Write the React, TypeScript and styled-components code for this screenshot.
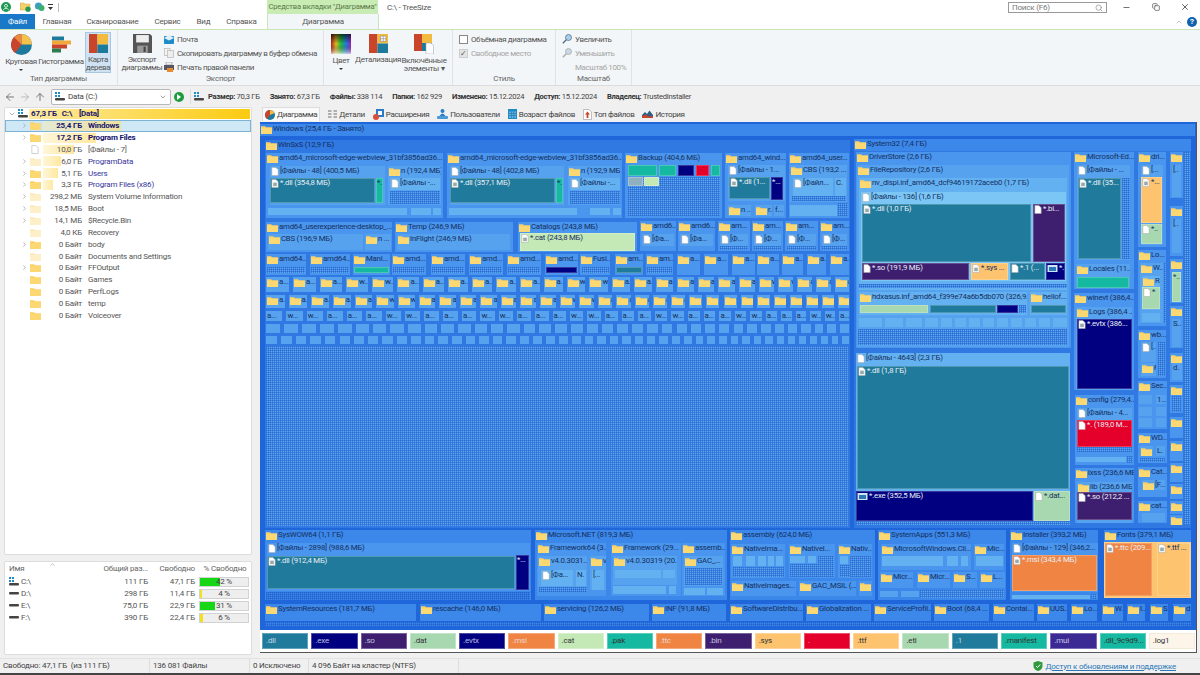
import React from "react";
import styled, { createGlobalStyle } from "styled-components";
import { ArrowLeft, ArrowRight, ArrowUp, ChevronDown, ChevronRight, ChevronUp, Minus, Copy, X, Search } from "lucide-react";

const UI_FONT = `Roboto, "Noto Sans", "Liberation Sans", sans-serif`;

const GlobalStyle = createGlobalStyle`
    html, body { margin: 0; padding: 0; background: #f0f0f0; }
    body { font-family: ${UI_FONT}; font-size: 8px; letter-spacing: -.2px; color: #444; }
    * { box-sizing: border-box; }
`;

const Shell = styled.div`
    width: 1200px;
    height: 675px;
    display: flex;
    flex-direction: column;
    overflow: hidden;
    background: #f0f0f0;
    border-bottom: 2px solid #444;
`;

/* ---------- title + tabs ---------- */

const TitleRow = styled.div`
    height: 14px;
    display: flex;
    align-items: center;
    background: #fff;
`;

const QuickAccess = styled.div`
    width: 267px;
    display: flex;
    align-items: center;
    gap: 3px;
    padding-left: 1px;
`;

const QuickSpacer = styled.div`
    width: 3px;
`;

const QuickSep = styled.div`
    width: 1px;
    height: 9px;
    margin-left: 2px;
    background: #bbb;
`;

const ContextTitle = styled.div`
    width: 111px;
    height: 14px;
    background: #c9ebb4;
    color: #5a7a4a;
    font-size: 7.6px;
    line-height: 14px;
    text-align: center;
    white-space: nowrap;
`;

const WindowTitle = styled.div`
    margin-left: 9px;
    font-size: 8px;
    color: #555;
    flex: 1;
`;

const SearchBox = styled.div`
    width: 99px;
    height: 11px;
    margin-top: 1px;
    border: 1px solid #999;
    display: flex;
    align-items: center;
    justify-content: space-between;
    padding: 0 3px;
    color: #777;
    font-size: 8px;
`;

const WindowButtons = styled.div`
    width: 93px;
    display: flex;
    justify-content: space-between;
    align-items: center;
    padding: 0 10px 0 15px;
    color: #444;
`;

const TabRow = styled.div`
    height: 15px;
    display: flex;
    align-items: stretch;
    background: #fff;
`;

const FileTab = styled.div`
    width: 35px;
    background: #1a78c8;
    color: #fff;
    font-size: 8px;
    line-height: 15px;
    text-align: center;
`;

const Tab = styled.div<{ $w: number }>`
    width: ${p => p.$w}px;
    color: #555;
    font-size: 8px;
    line-height: 15px;
    text-align: center;
    white-space: nowrap;
`;

const ActiveTab = styled.div`
    width: 112px;
    margin-left: 2px;
    color: #555;
    font-size: 8px;
    line-height: 15px;
    text-align: center;
    background: #f3f6f8;
    border: 1px solid #c9e4b6;
    border-width: 0 1px;
`;

const HelpCorner = styled.div`
    margin-left: auto;
    display: flex;
    align-items: center;
    gap: 4px;
    padding-right: 3px;
    color: #aaa;
`;

const HelpDot = styled.div`
    width: 10px;
    height: 10px;
    border-radius: 50%;
    background: #0f62ae;
    color: #fff;
    font-size: 8px;
    font-weight: 700;
    line-height: 10px;
    text-align: center;
`;

/* ---------- ribbon ---------- */

const Ribbon = styled.div`
    height: 57px;
    display: flex;
    background: #f3f6f8;
    border-top: 1px solid #c9e4b6;
    border-bottom: 1px solid #dcdcdc;
`;

const Group = styled.div<{ $w: number }>`
    width: ${p => p.$w}px;
    display: flex;
    flex-direction: column;
    border-right: 1px solid #e0e3e5;
`;

const GroupBody = styled.div<{ $pad?: number }>`
    flex: 1;
    display: flex;
    padding: 2px 0 0 ${p => p.$pad ?? 0}px;
`;

const GroupLabel = styled.div`
    height: 12px;
    line-height: 11px;
    text-align: center;
    color: #666;
    font-size: 8px;
`;

const BigButton = styled.div<{ $w: number; $on?: boolean; $ml?: number }>`
    width: ${p => p.$w}px;
    height: 41px;
    margin-left: ${p => p.$ml ?? 0}px;
    flex: none;
    display: flex;
    flex-direction: column;
    align-items: center;
    color: #555;
    font-size: 8px;
    letter-spacing: -.35px;
    line-height: 8px;
    text-align: center;
    padding-top: 1px;
    background: ${p => (p.$on ? "#cfe2f3" : "transparent")};
    border: 1px solid ${p => (p.$on ? "#a8c8e2" : "transparent")};
    svg { flex: none; margin-bottom: 3px; }
`;

const BigWord = styled.span`
    white-space: nowrap;
`;

const Caret = styled.div`
    width: 0;
    height: 0;
    margin: 3px auto 0;
    border: 2px solid transparent;
    border-top: 2px solid #333;
    border-bottom: 0;
`;

const SmallStack = styled.div<{ $ml?: number }>`
    margin-left: ${p => p.$ml ?? 0}px;
    padding-top: 1px;
    display: flex;
    flex-direction: column;
    gap: 2px;
`;

const SmallRow = styled.div<{ $muted?: boolean }>`
    height: 12px;
    display: flex;
    align-items: center;
    gap: 3px;
    white-space: nowrap;
    font-size: 8px;
    letter-spacing: -.4px;
    color: ${p => (p.$muted ? "#a5a5a5" : "#555")};
`;

const Check = styled.div<{ $on?: boolean }>`
    width: 9px;
    height: 9px;
    border: 1px solid ${p => (p.$on ? "#ccc" : "#888")};
    background: ${p => (p.$on ? "#e4e4e4" : "#fff")};
    color: #555;
    font-size: 8px;
    line-height: 7px;
    text-align: center;
`;

const IconSlot = styled.div`
    width: 10px;
    height: 9px;
`;

/* ---------- address bar ---------- */

const AddressBar = styled.div`
    height: 21px;
    display: flex;
    align-items: center;
    background: #f0f0f0;
    padding-left: 4px;
    color: #666;
`;

const NavIcons = styled.div`
    width: 47px;
    display: flex;
    gap: 3px;
    color: #777;
`;

const DriveCombo = styled.div`
    width: 120px;
    height: 16px;
    background: #fff;
    border: 1px solid #b8b8b8;
    border-radius: 2px;
    display: flex;
    align-items: center;
    gap: 3px;
    padding: 0 3px;
    font-size: 8px;
    color: #444;
`;

const ComboText = styled.span`
    flex: 1;
`;

const PlayButton = styled.div`
    width: 10px;
    height: 10px;
    margin: 0 6px 0 3px;
    border-radius: 50%;
    background: #1d9a3c;
    display: flex;
    align-items: center;
    justify-content: center;
    &::after {
        content: "";
        border: 3px solid transparent;
        border-left: 4px solid #fff;
        border-right: 0;
    }
`;

const StatsRow = styled.div`
    display: flex;
    align-items: center;
    gap: 10px;
    padding-left: 3px;
    border-left: 1px solid #ddd;
    height: 15px;
`;

const StatLead = styled.div`
    display: flex;
    align-items: center;
    gap: 4px;
`;

const Stat = styled.span`
    font-size: 7.6px;
    letter-spacing: -.3px;
    color: #444;
    white-space: nowrap;
    b { color: #333; font-weight: 700; }
`;

/* ---------- body ---------- */

const Main = styled.div`
    flex: 1;
    min-height: 0;
    display: flex;
`;

const Sidebar = styled.div`
    width: 260px;
    padding: 0 8px 0 4px;
    display: flex;
    flex-direction: column;
`;

const TreePanel = styled.div`
    height: 448px;
    background: #fff;
    border: 1px solid #ddd;
    border-radius: 2px;
`;

const TreeRow = styled.div<{ $selected?: boolean }>`
    position: relative;
    height: 11.85px;
    display: flex;
    align-items: center;
    white-space: nowrap;
    font-size: 8px;
    line-height: 11px;
    background: ${p => (p.$selected ? "#cfe8f6" : "transparent")};
    box-shadow: ${p => (p.$selected ? "inset 0 0 0 1px #7cb2d4" : "none")};
`;

const SizeBar = styled.div`
    position: absolute;
    top: 1px;
    bottom: 1px;
    left: 38px;
    background: linear-gradient(90deg, rgba(255, 236, 170, .45), rgba(255, 222, 120, .7));
`;

const RootBar = styled(SizeBar)`
    left: 24px;
    right: 1px;
    background: linear-gradient(90deg, #ffeaa0, #fbcb10);
`;

const Chevron = styled.div`
    position: relative;
    width: 24px;
    flex: none;
    display: flex;
    justify-content: flex-end;
    padding-right: 1px;
    color: #888;
`;

const RootChevron = styled(Chevron)`
    width: 12px;
`;

const RowIcon = styled.div`
    position: relative;
    width: 12px;
    flex: none;
    display: flex;
    justify-content: center;
`;

const RowSize = styled.span<{ $bold?: boolean }>`
    position: relative;
    width: 41px;
    flex: none;
    text-align: right;
    font-weight: ${p => (p.$bold ? 700 : 400)};
    color: ${p => (p.$bold ? "#1a1a70" : "#555")};
`;

const RowName = styled.span<{ $kind: string }>`
    position: relative;
    margin-left: 6px;
    font-weight: ${p => (p.$kind === "bold" ? 700 : 400)};
    color: ${p => (p.$kind === "bold" ? "#14146e" : p.$kind === "blue" ? "#35359a" : "#555")};
`;

const RootText = styled.span<{ $ml: number }>`
    position: relative;
    margin-left: ${p => p.$ml}px;
    font-weight: 700;
    font-size: 8px;
    color: #1a1a70;
`;

const DrivesPanel = styled.div`
    height: 94px;
    margin-top: 6px;
    background: #fff;
    border: 1px solid #ddd;
    border-radius: 2px;
    position: relative;
`;

const SortMark = styled.div`
    position: absolute;
    top: -1px;
    left: 44px;
    color: #999;
`;

const DriveGrid = styled.div`
    display: grid;
    grid-template-columns: 90px 56px 47px 1fr;
    grid-auto-rows: 11.9px;
    align-items: center;
    height: 100%;
    padding-top: 2px;
`;

const HeadCell = styled.div<{ $align?: string }>`
    height: 15px;
    line-height: 15px;
    padding: 0 3px 0 4px;
    text-align: ${p => p.$align ?? "right"};
    white-space: nowrap;
    font-size: 8px;
    color: #666;
    margin-bottom: 3px;
`;

const DriveCell = styled.div<{ $align?: string }>`
    display: flex;
    align-items: center;
    justify-content: ${p => p.$align ?? "flex-end"};
    gap: 2px;
    padding: 0 3px 0 4px;
    font-size: 8px;
    color: #555;
    white-space: nowrap;
`;

const FreeBar = styled.div`
    position: relative;
    width: 50px;
    height: 10px;
    margin-left: 1px;
    background: #eee;
    border: 1px solid #d2d2d2;
    text-align: center;
    line-height: 8px;
    font-size: 8px;
    color: #444;
`;

const FreeFill = styled.div<{ $low?: boolean }>`
    position: absolute;
    top: 0;
    bottom: 0;
    left: 0;
    background: ${p => (p.$low ? "#f2e21e" : "#16d616")};
`;

const FreeText = styled.span`
    position: relative;
`;

const Content = styled.div`
    flex: 1;
    min-width: 0;
    display: flex;
    flex-direction: column;
    padding-right: 3px;
`;

const ViewTabs = styled.div`
    height: 15px;
    display: flex;
    align-items: flex-start;
    gap: 8px;
    padding-left: 2px;
`;

const ViewTab = styled.div<{ $on?: boolean }>`
    height: 14px;
    display: flex;
    align-items: center;
    gap: 2px;
    padding: 0 ${p => (p.$on ? 2 : 0)}px;
    font-size: 8px;
    letter-spacing: -.35px;
    color: #444;
    white-space: nowrap;
    background: ${p => (p.$on ? "#fafafa" : "transparent")};
    border: ${p => (p.$on ? "1px solid #ddd" : "0")};
    border-bottom: 0;
`;

const Frame = styled.div`
    width: 937px;
    height: 531px;
    display: flex;
    flex-direction: column;
    background: #fff;
    border-right: 1px solid #555;
    border-bottom: 1px solid #555;
`;

const Canvas = styled.div`
    position: relative;
    height: 508px;
    overflow: hidden;
    background: #1f66da;
`;

const fills: Record<string, string> = {
    b0: "#3078e2",
    b1: "#3c87ea",
    b2: "#4a95ee",
    b3: "#56a2ef",
    b4: "#64b1f2",
    b5: "#7cc6f5",
    dll: "#1f7a9c",
    exe: "#000080",
    so: "#3e1f6f",
    dat: "#a8d8b0",
    cat: "#c5e8b7",
    pak: "#15b8a0",
    red: "#e4002b",
    msi: "#f08442",
    sys: "#fdc36f",
    mui: "#3c2a94",
    grey: "#8fb0c0",
    log: "#fdf5ea",
    dots: "#5aa6f0",
    dotsb: "#3c87ea",
};

const darkFills = ["dll", "exe", "so", "red", "msi", "mui"];

const lighter = (tone: string) => (tone.startsWith("b") || tone.startsWith("dots") ? "transparent" : "rgba(255,255,255,.22)");

const Cell = styled.div.attrs<{ $x: number; $y: number; $w: number; $h: number }>(p => ({
    style: { left: p.$x - 260, top: p.$y - 122, width: p.$w, height: p.$h },
}))<{ $x: number; $y: number; $w: number; $h: number; $tone: string }>`
    position: absolute;
    overflow: hidden;
    white-space: nowrap;
    display: flex;
    align-items: flex-start;
    padding: 0 0 0 1px;
    font-size: 7.8px;
    letter-spacing: -.22px;
    line-height: 10px;
    background-color: ${p => fills[p.$tone]};
    color: ${p => (darkFills.includes(p.$tone) ? "#e8eef5" : "#15305f")};
    box-shadow: inset 0 0 0 1px ${p => lighter(p.$tone)};
    ${p =>
        p.$tone.startsWith("dots")
            ? `background-image: linear-gradient(90deg, rgba(25,85,200,.45) 1px, transparent 1px), linear-gradient(rgba(25,85,200,.45) 1px, transparent 1px);
               background-size: 2px 2px;`
            : ""}
    svg { flex: none; margin: 1px 1px 0 0; }
`;

const Legend = styled.div`
    flex: 1;
    display: flex;
    align-items: center;
    gap: 3px;
    padding: 0 1px 1px 2px;
`;

const Chip = styled.div<{ $tone: string }>`
    flex: 1;
    min-width: 0;
    height: 16px;
    padding-left: 3px;
    overflow: hidden;
    white-space: nowrap;
    font-size: 8px;
    line-height: 14px;
    background: ${p => fills[p.$tone]};
    color: ${p => (darkFills.includes(p.$tone) ? "rgba(235,240,255,.78)" : "#333")};
    border: 1px solid ${p => (p.$tone === "log" ? "#f4ead8" : "rgba(255,255,255,.3)")};
`;

const StatusBar = styled.div`
    height: 15px;
    display: flex;
    align-items: center;
    font-size: 8px;
    color: #444;
    white-space: nowrap;
    border-top: 1px solid #e2e2e2;
`;

const StatusCell = styled.div<{ $w: number }>`
    width: ${p => p.$w}px;
    padding-left: 3px;
    height: 100%;
    line-height: 14px;
    border-right: 1px solid #ddd;
`;

const StatusLink = styled.a`
    margin-left: auto;
    padding-right: 24px;
    display: flex;
    align-items: center;
    gap: 2px;
    color: #2a78b8;
    text-decoration: underline;
`;

/* ---------- drawings ---------- */

const Folder = ({ pale }: { pale?: boolean }) => (
    <svg width="11" height="9" viewBox="0 0 11 9">
        <path d="M0 1.2 L4 1.2 L5 2.2 L11 2.2 L11 9 L0 9 Z" fill={pale ? "#fbe9b8" : "#fbd066"} />
        <rect x="0" y="3" width="11" height="6" fill={pale ? "#fdf0c8" : "#fcd873"} />
    </svg>
);

const Doc = ({ inner }: { inner?: string }) => (
    <svg width="8" height="9" viewBox="0 0 8 10">
        <path d="M.5 .5 H5 L7.5 3 V9.5 H.5 Z" fill="#fff" stroke="#aaa" strokeWidth=".6" />
        {inner && <rect x="2" y="4" width="4" height="4" fill={inner} />}
    </svg>
);

const ExeIcon = () => (
    <svg width="11" height="9" viewBox="0 0 11 9">
        <rect x=".5" y="1" width="10" height="7" fill="#cfe4f5" />
        <rect x="2" y="3" width="7" height="4" fill="#2a78b8" />
    </svg>
);

const DriveIcon = () => (
    <svg width="10" height="9" viewBox="0 0 10 9">
        <rect x="0" y="0" width="2" height="2" fill="#1f8ac8" />
        <rect x="3" y="0" width="2" height="2" fill="#1f8ac8" />
        <rect x="0" y="3" width="2" height="2" fill="#1f8ac8" />
        <rect x="3" y="3" width="2" height="2" fill="#1f8ac8" />
        <rect x="0" y="6" width="10" height="2.5" rx="1" fill="#444" />
    </svg>
);

const DiskIcon = () => (
    <svg width="10" height="5" viewBox="0 0 10 5">
        <rect x="0" y="1" width="10" height="2.5" rx="1" fill="#444" />
    </svg>
);

const cellIcon = (kind?: string) => {
    if (kind === "f") return <Folder />;
    if (kind === "d") return <Doc />;
    if (kind === "s") return <Doc inner="#9aa" />;
    if (kind === "x") return <ExeIcon />;
    return null;
};

const PieIcon = () => (
    <svg width="21" height="21" viewBox="0 0 20 20">
        <circle cx="10" cy="10" r="10" fill="#1d7a9c" />
        <path d="M10 10 L10 0 A10 10 0 0 0 0 10 A10 10 0 0 0 4 18 Z" fill="#c8452c" />
        <path d="M10 10 L10 0 A10 10 0 0 1 20 10 Z" fill="#f6c04c" />
        <path d="M10 10 L3 3 A10 10 0 0 1 10 0 Z" fill="#ef8a3c" />
    </svg>
);

const HistogramIcon = () => (
    <svg width="20" height="21" viewBox="0 0 20 20">
        <rect x="1" y="2" width="12" height="4" fill="#1d7a9c" />
        <rect x="1" y="6" width="19" height="4" fill="#f2a93a" />
        <rect x="1" y="10" width="15" height="4" fill="#c8452c" />
        <rect x="1" y="14" width="9" height="4" fill="#2e7d4f" />
    </svg>
);

const TreemapIcon = () => (
    <svg width="19" height="19" viewBox="0 0 18 18">
        <rect width="8" height="18" fill="#c8452c" />
        <rect x="8" width="10" height="10" fill="#f2bb40" />
        <rect x="8" y="10" width="10" height="8" fill="#1d7a9c" />
    </svg>
);

const FloppyIcon = () => (
    <svg width="19" height="19" viewBox="0 0 18 18">
        <path d="M0 0 H16 L18 2 V18 H0 Z" fill="#555" />
        <rect x="3" y="1" width="12" height="7" fill="#eee" />
        <rect x="4" y="11" width="10" height="7" fill="#999" />
        <rect x="10" y="12" width="2" height="5" fill="#444" />
    </svg>
);

const RainbowIcon = () => (
    <svg width="20" height="20" viewBox="0 0 20 20">
        <defs>
            <linearGradient id="rainbowH" x1="0" x2="1" y1="0" y2="0">
                <stop offset="0" stopColor="#c02020" />
                <stop offset=".25" stopColor="#e0c020" />
                <stop offset=".5" stopColor="#20c040" />
                <stop offset=".75" stopColor="#2080e0" />
                <stop offset="1" stopColor="#a020c0" />
            </linearGradient>
            <linearGradient id="rainbowV" x1="0" x2="0" y1="0" y2="1">
                <stop offset="0" stopColor="#000" stopOpacity=".7" />
                <stop offset=".5" stopColor="#000" stopOpacity="0" />
                <stop offset="1" stopColor="#fff" stopOpacity=".7" />
            </linearGradient>
        </defs>
        <rect width="20" height="20" fill="url(#rainbowH)" />
        <rect width="20" height="20" fill="url(#rainbowV)" />
    </svg>
);

const DetailIcon = () => (
    <svg width="19" height="19" viewBox="0 0 18 18">
        <rect width="8" height="18" fill="#c8452c" />
        <rect x="8" width="10" height="9" fill="#f2bb40" />
        <rect x="8" y="9" width="10" height="9" fill="#1d7a9c" />
        <path d="M11 2 H16 V7 H11 Z M13.5 2 V7 M11 4.5 H16" fill="#fff" stroke="#777" strokeWidth=".5" />
    </svg>
);

const IncludedIcon = () => (
    <svg width="20" height="20" viewBox="0 0 20 20">
        <rect width="8" height="17" fill="#c8452c" />
        <rect x="8" width="10" height="9" fill="#f2bb40" />
        <rect x="8" y="9" width="10" height="8" fill="#1d7a9c" />
        <path d="M12 9 H17 L19.5 11.5 V20 H12 Z" fill="#fff" stroke="#999" strokeWidth=".5" />
    </svg>
);

const MailIcon = () => (
    <svg width="10" height="9" viewBox="0 0 10 9">
        <rect y="1" width="10" height="8" rx="1" fill="#1f8ac8" />
        <path d="M0 3 L5 0 L10 3 L5 5.5 Z" fill="#dff0fa" />
    </svg>
);

const CopyIcon = () => (
    <svg width="10" height="10" viewBox="0 0 10 10">
        <rect x=".5" y=".5" width="5.5" height="7" fill="#f4f4f4" stroke="#b5b5b5" strokeWidth=".7" />
        <rect x="3.5" y="2.5" width="6" height="7" fill="#eee" stroke="#b5b5b5" strokeWidth=".7" />
    </svg>
);

const PrintIcon = () => (
    <svg width="10" height="10" viewBox="0 0 10 10">
        <rect x="2" y="0" width="6" height="3" fill="#eee" stroke="#777" strokeWidth=".5" />
        <rect x="0" y="3" width="10" height="5" fill="#556" />
        <rect x="3" y="6" width="6" height="4" fill="#e98a2c" />
    </svg>
);

const ZoomIcon = ({ muted }: { muted?: boolean }) => (
    <svg width="10" height="10" viewBox="0 0 10 10">
        <circle cx="6.5" cy="3.5" r="3" fill={muted ? "#c8d8e4" : "#a8d0ec"} stroke={muted ? "#aaa" : "#56708a"} strokeWidth=".8" />
        <path d="M4.3 5.7 L.8 9.2" stroke={muted ? "#aaa" : "#56708a"} strokeWidth="1.4" />
    </svg>
);

const PersonBadge = () => (
    <svg width="10" height="10" viewBox="0 0 10 10">
        <circle cx="5" cy="5" r="5" fill="#1e9a50" />
        <circle cx="5" cy="3.8" r="1.5" fill="none" stroke="#fff" strokeWidth=".8" />
        <path d="M2.2 8 Q5 4.5 7.8 8" fill="none" stroke="#fff" strokeWidth=".8" />
    </svg>
);

const FolderPlay = () => (
    <svg width="11" height="10" viewBox="0 0 11 10">
        <path d="M0 1 H4 L5 2 H10 V8 H0 Z" fill="#f5cf6c" stroke="#b89a40" strokeWidth=".4" />
        <circle cx="8" cy="7.2" r="2.6" fill="#1e9a50" />
    </svg>
);

const CloudBadge = () => (
    <svg width="11" height="10" viewBox="0 0 11 10">
        <circle cx="4.5" cy="4" r="3.6" fill="#3aa0c0" />
        <circle cx="7.5" cy="6" r="3" fill="#3bb070" />
    </svg>
);

const DropMark = () => (
    <svg width="5" height="7" viewBox="0 0 5 7">
        <rect y="0" width="5" height="1" fill="#333" />
        <path d="M0 3 H5 L2.5 6 Z" fill="#333" />
    </svg>
);

const TabPie = () => (
    <svg width="10" height="10" viewBox="0 0 10 10">
        <circle cx="5" cy="5" r="5" fill="#1d7a9c" />
        <path d="M5 5 L5 0 A5 5 0 0 0 0 5 A5 5 0 0 0 2 9 Z" fill="#c8452c" />
        <path d="M5 5 L5 0 A5 5 0 0 1 9.5 3 Z" fill="#f2bb40" />
    </svg>
);

const TabGrid = () => (
    <svg width="9" height="9" viewBox="0 0 9 9">
        <path d="M0 1 H3.5 M0 4 H3.5 M0 7 H3.5 M5.5 1 H9 M5.5 4 H9 M5.5 7 H9" stroke="#999" strokeWidth="1.6" />
    </svg>
);

const TabExt = () => (
    <svg width="11" height="11" viewBox="0 0 11 11">
        <rect x="3" y="0" width="8" height="8" fill="#2a7cc8" />
        <rect x="5" y="2" width="4" height="4" fill="#fff" />
        <circle cx="3" cy="8" r="3" fill="#d8503a" />
    </svg>
);

const TabUsers = () => (
    <svg width="11" height="10" viewBox="0 0 11 10">
        <circle cx="5.5" cy="2" r="2" fill="#2a7cc8" />
        <path d="M2.5 7 Q5.5 2 8.5 7 Z" fill="#2a7cc8" />
        <rect y="7" width="11" height="3" rx="1" fill="#4a9ad8" />
    </svg>
);

const TabCalendar = () => (
    <svg width="9" height="10" viewBox="0 0 9 10">
        <rect width="9" height="10" fill="#1f8ac8" />
        <rect x="1" y="2.5" width="7" height="6.5" fill="#5ab0e0" />
        <path d="M1 4.5 H8 M1 6.5 H8 M3.5 2.5 V9 M5.8 2.5 V9" stroke="#1f6a9c" strokeWidth=".5" />
    </svg>
);

const TabTop = () => (
    <svg width="9" height="11" viewBox="0 0 9 11">
        <path d="M.5 .5 H6 L8.5 3 V10.5 H.5 Z" fill="#fff" stroke="#999" strokeWidth=".6" />
        <path d="M4.5 2.5 L7 5.5 H5.4 V9 H3.6 V5.5 H2 Z" fill="#c8452c" />
    </svg>
);

const TabHistory = () => (
    <svg width="11" height="8" viewBox="0 0 11 8">
        <path d="M0 8 V5 L3 2 L5 4 L7.5 0.5 L11 5 V8 Z" fill="#2c5f88" />
        <path d="M0 8 V6 L4 4.5 L7 6.5 L11 6 V8 Z" fill="#c8452c" />
    </svg>
);

const ShieldIcon = () => (
    <svg width="10" height="10" viewBox="0 0 10 10">
        <path d="M5 0 L9.5 1.5 V5 Q9.5 8.5 5 10 Q.5 8.5 .5 5 V1.5 Z" fill="#2f9a3c" />
        <path d="M3 5 L4.5 6.5 L7.2 3.5" fill="none" stroke="#fff" strokeWidth="1" />
    </svg>
);

/* ---------- data ---------- */

type Item = [number, number, number, number, string, string?, string?];

// evenly shrinking row of small tiles, the way a treemap runs out of room
const tileRow = (y: number, h: number, n: number, labels?: string[], icon?: string): Item[] => {
    const x0 = 266;
    const x1 = 849;
    const gap = 4;
    const weights = Array.from({ length: n }, (_, i) => 1 - (0.4 * i) / n);
    const sum = weights.reduce((a, b) => a + b, 0);
    const free = x1 - x0 - gap * (n - 1);
    let x = x0;
    return weights.map((wt, i) => {
        const w = (free * wt) / sum;
        const item: Item = [x, y, w, h, "b3", labels ? labels[i % labels.length] : undefined, icon];
        x += w + gap;
        return item;
    });
};

const run = (y: number, h: number, tone: string, spans: [number, number, string?, string?][]): Item[] =>
    spans.map(([a, b, label, icon]) => [a, y, b - a, h, tone, label, icon]);

const winSxS: Item[] = [
    [265, 140, 585, 388, "b0", "WinSxS (12,9 ГБ)", "f"],
    [266, 153, 177, 65, "b2", "amd64_microsoft-edge-webview_31bf3856ad36...", "f"],
    [270, 166, 115, 39, "b3", "[Файлы - 48] (400,5 МБ)", "d"],
    [270, 178, 105, 25, "dll", "*.dll (354,8 МБ)", "s"],
    [376, 178, 7, 25, "pak", "*."],
    [388, 166, 53, 39, "b3", "n (192,4 МБ)", "f"],
    [390, 178, 50, 12, "b4", "[Файлы -...", "d"],
    [390, 191, 50, 13, "dots"],
    [268, 208, 139, 7, "b4"],
    [411, 208, 20, 7, "b4"],
    [433, 208, 8, 7, "b4"],
    [447, 153, 175, 65, "b2", "amd64_microsoft-edge-webview_31bf3856ad36...", "f"],
    [450, 166, 114, 39, "b3", "[Файлы - 48] (402,8 МБ)", "d"],
    [450, 178, 105, 25, "dll", "*.dll (357,1 МБ)", "s"],
    [556, 178, 7, 25, "pak", "*."],
    [568, 166, 52, 39, "b3", "n (192,9 МБ)", "f"],
    [570, 178, 50, 12, "b4", "[Файлы -...", "d"],
    [570, 191, 50, 13, "dots"],
    [449, 208, 128, 7, "b4"],
    [590, 208, 20, 7, "b4"],
    [613, 208, 8, 7, "b4"],
    [625, 153, 97, 65, "b2", "Backup (404,6 МБ)", "f"],
    [628, 177, 92, 39, "dots"],
    [628, 165, 29, 11, "pak"],
    [659, 165, 17, 11, "pak"],
    [678, 165, 16, 11, "exe"],
    [696, 165, 13, 11, "red"],
    [711, 165, 9, 11, "pak"],
    [628, 177, 15, 9, "grey"],
    [644, 177, 15, 9, "cat"],
    [725, 153, 61, 65, "b2", "amd64_wind...", "f"],
    [728, 165, 57, 36, "b3", "[Файлы - 1...", "d"],
    [729, 177, 41, 22, "dll", "*.dll (1...", "s"],
    [771, 177, 12, 23, "exe", "*..."],
    [728, 205, 23, 11, "b3", "n ...", "f"],
    [755, 205, 17, 11, "b3", "r.", "f"],
    [774, 205, 10, 11, "b3", "f..."],
    [789, 153, 60, 65, "b2", "amd64_user...", "f"],
    [790, 165, 57, 37, "b3", "CBS (193,2 ...", "f"],
    [793, 178, 40, 18, "b4", "[Файл...", "d"],
    [835, 178, 11, 18, "b4", "C."],
    [792, 196, 54, 5, "dots"],
    [790, 205, 47, 11, "b4"],
    [838, 203, 10, 13, "dots"],
    [266, 222, 126, 30, "b2", "amd64_userexperience-desktop_...", "f"],
    [268, 234, 95, 16, "b3", "CBS (196,9 МБ)", "f"],
    [365, 234, 26, 16, "b3", "n ...", "f"],
    [395, 222, 118, 30, "b2", "Temp (246,9 МБ)", "f"],
    [397, 234, 113, 16, "b3", "InFlight (246,9 МБ)", "f"],
    [518, 222, 119, 30, "b2", "Catalogs (243,8 МБ)", "f"],
    [520, 233, 115, 18, "cat", "*.cat (243,8 МБ)", "s"],
    ...run(221, 30, "b2", [
        [640, 676, "amd6...", "f"],
        [678, 715, "amd6...", "f"],
        [718, 750, "am...", "f"],
        [752, 783, "am...", "f"],
        [785, 818, "am...", "f"],
        [820, 849, "am...", "f"],
    ]),
    ...run(234, 12, "b3", [
        [642, 674, "[Фа...", "d"],
        [680, 713, "[Фа...", "d"],
        [720, 748, "[Ф...", "d"],
        [754, 781, "[Ф...", "d"],
        [787, 816, "[Ф...", "d"],
        [822, 847, "[Ф...", "d"],
    ]),
    ...run(246, 4, "dots", [
        [720, 748],
        [754, 781],
        [787, 816],
        [822, 847],
    ]),
    ...run(254, 21, "b2", [
        [266, 306, "amd64...", "f"],
        [310, 350, "amd64...", "f"],
        [353, 390, "Mani...", "f"],
        [392, 426, "amd...", "f"],
        [431, 465, "amd...", "f"],
        [469, 503, "amd...", "f"],
        [507, 541, "amd...", "f"],
        [545, 578, "amd...", "f"],
        [580, 610, "Fusi...", "f"],
        [615, 643, "am...", "f"],
        [646, 673, "am...", "f"],
        [677, 700, "a...", "f"],
        [704, 728, "a...", "f"],
        [732, 755, "a...", "f"],
        [757, 779, "a...", "f"],
        [782, 803, "a...", "f"],
        [807, 826, "a...", "f"],
        [830, 849, "a...", "f"],
    ]),
    ...run(267, 6, "dots", [
        [267, 305],
        [311, 349],
        [393, 425],
        [432, 464],
        [470, 502],
        [508, 540],
        [582, 609],
        [647, 672],
    ]),
    [354, 267, 35, 6, "pak"],
    [546, 267, 31, 6, "exe"],
    [616, 267, 26, 6, "dll"],
    ...tileRow(277, 15, 26, ["a...", "a...", "a...", "w...", "w...", "a...", "a...", "a...", "a..."], "f"),
    ...tileRow(295, 13, 31, ["a.", "a.", "a.", "a.", "a.", "w", "w", "a.", "a."], "f"),
    ...tileRow(311, 10, 34, ["a...", "w...", "w...", "a...", "a..."]),
    ...tileRow(324, 9, 38),
    ...tileRow(336, 8, 46),
    [266, 346, 583, 180, "dots"],
];

const system32: Item[] = [
    [854, 139, 337, 389, "b0"],
    [854, 139, 337, 12, "b1", "System32 (7,4 ГБ)", "f"],
    [856, 152, 215, 196, "b2", "DriverStore (2,6 ГБ)", "f"],
    [857, 165, 212, 182, "b3", "FileRepository (2,6 ГБ)", "f"],
    [859, 178, 208, 112, "b4", "nv_dispi.inf_amd64_dcf94619172aceb0 (1,7 ГБ)", "f"],
    [861, 192, 205, 89, "b5", "[Файлы - 136] (1,6 ГБ)", "d"],
    [862, 204, 169, 58, "dll", "*.dll (1,0 ГБ)", "s"],
    [1033, 204, 32, 58, "so", "*.bi...", "d"],
    [862, 263, 107, 17, "so", "*.so (191,9 МБ)", "d"],
    [971, 263, 37, 17, "sys", "*.sys ...", "s"],
    [1010, 263, 35, 17, "dll", "*.1 (...", "d"],
    [1046, 263, 19, 17, "exe", "*.", "x"],
    [859, 284, 208, 4, "dots"],
    [859, 292, 168, 23, "b4", "hdxasus.inf_amd64_f399e74a6b5db070 (326,9...", "f"],
    [860, 305, 68, 8, "dat"],
    [930, 305, 66, 8, "dll"],
    [997, 305, 21, 8, "exe"],
    [1019, 305, 7, 8, "dots"],
    [1030, 292, 37, 23, "b4", "hellof...", "f"],
    [1031, 305, 35, 8, "dll"],
    ...run(318, 9, "b4", [
        [859, 882],
        [885, 903],
        [906, 922],
        [925, 938],
        [941, 952],
        [955, 966],
        [969, 980],
        [983, 994],
        [997, 1008],
        [1011, 1022],
        [1025, 1036],
        [1039, 1050],
        [1053, 1067],
    ]),
    [858, 329, 209, 16, "dots"],
    [856, 353, 214, 172, "b4", "[Файлы - 4643] (2,3 ГБ)", "d"],
    [857, 366, 212, 123, "dll", "*.dll (1,8 ГБ)", "s"],
    [856, 491, 177, 30, "exe", "*.exe (352,5 МБ)", "x"],
    [1034, 491, 36, 30, "dat", "*.dat...", "d"],
    [856, 521, 214, 4, "dots"],
    [1074, 152, 60, 137, "b2", "Microsoft-Ed...", "f"],
    [1077, 165, 53, 95, "b3", "[Файлы - ...", "d"],
    [1078, 178, 43, 81, "dll", "*.dll (35...", "s"],
    [1122, 178, 8, 81, "dots"],
    [1076, 264, 54, 24, "b3", "Locales (11...", "f"],
    [1077, 277, 52, 11, "pak"],
    [1074, 293, 60, 97, "b2", "winevt (386,4...", "f"],
    [1076, 307, 56, 83, "b3", "Logs (386,4 ...", "f"],
    [1077, 319, 55, 70, "exe", "*.evtx (386...", "s"],
    [1075, 395, 59, 70, "b2", "config (279,4...", "f"],
    [1077, 408, 55, 41, "b3", "[Файлы - 4...", "d"],
    [1077, 420, 55, 27, "red", "*. (189,0 М...", "d"],
    [1077, 447, 55, 5, "dots"],
    [1076, 457, 50, 5, "b4"],
    [1127, 456, 6, 7, "dots"],
    [1075, 468, 59, 55, "b2", "lxss (236,6 МБ)", "f"],
    [1077, 482, 55, 41, "b3", "lib (236,6 МБ)", "f"],
    [1077, 492, 55, 28, "so", "*.so (212,2 ...", "d"],
    [1138, 152, 28, 95, "b2", "dri...", "f"],
    [1141, 165, 22, 80, "b3", "[...", "d"],
    [1141, 177, 21, 46, "sys", "*...", "s"],
    [1141, 224, 21, 20, "dat", "*..", "d"],
    [1138, 250, 28, 76, "b2", "Lo...", "f"],
    [1140, 263, 23, 60, "b3", "W...", "f"],
    [1142, 276, 18, 34, "b4", "R.", "f"],
    [1142, 287, 18, 22, "dat", "*", "d"],
    [1142, 313, 18, 9, "b4"],
    [1164, 263, 2, 60, "dots"],
    [1138, 330, 28, 48, "b2", "wb...", "f"],
    [1141, 342, 15, 20, "b3", "[..", "d"],
    [1141, 363, 15, 13, "b3", "R.", "f"],
    [1158, 342, 7, 34, "dots"],
    [1138, 381, 29, 48, "b2", "Sec...", "f"],
    [1139, 395, 13, 9, "b3"],
    [1156, 395, 10, 9, "b3", "1..."],
    [1139, 407, 13, 9, "b3"],
    [1156, 407, 10, 9, "b3"],
    [1139, 418, 13, 9, "b3"],
    [1156, 418, 10, 9, "b3"],
    [1138, 433, 29, 30, "b2", "WD...", "f"],
    [1140, 446, 13, 10, "b3", "{.", "f"],
    [1156, 446, 9, 10, "b3", "L."],
    [1140, 458, 25, 4, "dots"],
    [1138, 467, 29, 30, "b2", "Cat...", "f"],
    [1142, 480, 23, 10, "b3", "[F...", "f"],
    [1138, 501, 29, 22, "b2", "cat...", "f"],
    [1142, 513, 23, 9, "b3"],
    [1170, 152, 13, 46, "b2", "", "f"],
    [1172, 165, 9, 32, "b3", "[.."],
    [1170, 206, 13, 50, "b2", "", "f"],
    [1172, 219, 9, 34, "b3", "[.."],
    [1170, 259, 13, 44, "b2", "", "f"],
    [1172, 272, 9, 30, "dat", "*.."],
    [1170, 306, 13, 42, "b2", "", "f"],
    [1172, 319, 9, 28, "b3", "S.."],
    [1170, 353, 13, 29, "b2", "", "f"],
    [1172, 363, 10, 17, "b3", "d."],
    [1170, 385, 13, 28, "b2", "", "f"],
    [1172, 396, 9, 16, "dots"],
    [1170, 417, 13, 21, "b2", "", "f"],
    [1170, 441, 13, 20, "b2", "", "f"],
    [1170, 463, 13, 19, "b2", "", "f"],
    [1170, 484, 13, 15, "b2", "", "f"],
    [1170, 501, 13, 13, "b2", "", "f"],
    [1170, 515, 13, 10, "b2", "", "f"],
    [1184, 152, 6, 373, "dots"],
];

const lowerBlocks: Item[] = [
    [265, 530, 266, 70, "b1", "SysWOW64 (1,1 ГБ)", "f"],
    [267, 543, 263, 48, "b2", "[Файлы - 2898] (988,6 МБ)", "d"],
    [267, 556, 248, 33, "dll", "*.dll (912,4 МБ)", "s"],
    [516, 555, 13, 35, "exe", "*..."],
    [266, 592, 264, 8, "dotsb"],
    [535, 530, 192, 70, "b1", "Microsoft.NET (819,3 МБ)", "f"],
    [537, 543, 69, 53, "b2", "Framework64 (3...", "f"],
    [538, 556, 49, 31, "b3", "v4.0.3031...", "f"],
    [541, 570, 32, 16, "b4", "[Фа...", "d"],
    [576, 570, 10, 16, "b4", "N."],
    [539, 587, 48, 5, "dots"],
    [590, 556, 16, 34, "b3", "v", "f"],
    [592, 570, 12, 20, "b4", "[..."],
    [611, 543, 70, 53, "b2", "Framework (29...", "f"],
    [613, 556, 64, 29, "b3", "v4.0.30319 (20...", "f"],
    [615, 570, 46, 8, "b4"],
    [663, 570, 12, 8, "b4"],
    [613, 586, 53, 8, "b4"],
    [669, 586, 7, 8, "b4"],
    [682, 543, 43, 53, "b2", "assemb...", "f"],
    [684, 556, 39, 30, "b3", "GAC_...", "f"],
    [685, 568, 37, 17, "dots"],
    [684, 588, 21, 7, "b4"],
    [707, 588, 16, 7, "b4"],
    [730, 530, 145, 70, "b1", "assembly (624,0 МБ)", "f"],
    [731, 544, 54, 34, "b2", "NativeIma...", "f"],
    [733, 556, 9, 10, "b4"],
    [746, 556, 9, 10, "b4"],
    [758, 556, 8, 10, "b4"],
    [768, 556, 6, 10, "b4"],
    [776, 556, 7, 10, "b4"],
    [733, 567, 51, 10, "dots"],
    [789, 544, 46, 34, "b2", "Nativel...", "f"],
    [790, 556, 15, 7, "b4"],
    [808, 556, 8, 7, "b4"],
    [790, 564, 44, 13, "dots"],
    [818, 556, 16, 8, "dots"],
    [838, 544, 34, 34, "b2", "Nativ...", "f"],
    [840, 556, 8, 8, "b4"],
    [850, 556, 21, 21, "dots"],
    [840, 565, 10, 12, "dots"],
    [731, 581, 65, 15, "b2", "NativeImages...", "f"],
    [799, 581, 57, 15, "b2", "GAC_MSIL (...", "f"],
    [859, 581, 13, 15, "b2", "(", "f"],
    [878, 530, 128, 70, "b1", "SystemApps (551,3 МБ)", "f"],
    [881, 544, 90, 26, "b2", "MicrosoftWindows.Cli...", "f"],
    [882, 556, 61, 10, "b4"],
    [947, 556, 11, 10, "b4"],
    [961, 556, 7, 10, "b4"],
    [974, 544, 30, 26, "b2", "Mic...", "f"],
    [976, 556, 27, 10, "b4"],
    [880, 572, 33, 16, "b2", "Micr...", "f"],
    [917, 572, 33, 16, "b2", "Micr...", "f"],
    [953, 572, 24, 16, "b2", "S...", "f"],
    [980, 572, 25, 16, "b2", "L...", "f"],
    [880, 591, 18, 6, "b3"],
    [901, 591, 18, 6, "b3"],
    [920, 590, 84, 8, "dots"],
    [1010, 530, 88, 70, "b1", "Installer (393,2 МБ)", "f"],
    [1012, 543, 86, 49, "b2", "[Файлы - 129] (346,2...", "d"],
    [1012, 555, 85, 36, "msi", "*.msi (343,4 МБ)", "s"],
    [1012, 595, 78, 4, "b4"],
    [1091, 594, 6, 5, "dots"],
    [1104, 530, 87, 12, "b1", "Fonts (379,1 МБ)", "f"],
    [1104, 542, 87, 56, "sys"],
    [1105, 543, 47, 53, "msi", "*.ttc (209...", "s"],
    [1157, 543, 33, 53, "sys", "*.ttf ...", "s"],
    ...run(604, 17, "b1", [
        [265, 416, "SystemResources (181,7 МБ)", "f"],
        [420, 541, "rescache (146,0 МБ)", "f"],
        [544, 649, "servicing (126,2 МБ)", "f"],
        [652, 726, "INF (91,8 МБ)", "f"],
        [730, 803, "SoftwareDistribu...", "f"],
        [806, 871, "Globalization ...", "f"],
        [874, 931, "ServiceProfil...", "f"],
        [934, 989, "Boot (68,4 ...", "f"],
        [993, 1034, "Contai...", "f"],
        [1037, 1067, "UUS...", "f"],
        [1071, 1097, "Lo...", "f"],
        [1102, 1123, "W.", "f"],
        [1127, 1145, "I..", "f"],
        [1150, 1168, "S..", "f"],
        [1173, 1191, "d..", "f"],
    ]),
    [265, 622, 926, 4, "dotsb"],
];

const cells: Item[] = [
    [260, 124, 935, 12, "b1", "Windows (25,4 ГБ - Занято)", "f"],
    ...winSxS,
    ...system32,
    ...lowerBlocks,
];

const legend: [string, string][] = [
    [".dll", "dll"],
    [".exe", "exe"],
    [".so", "so"],
    [".dat", "dat"],
    [".evtx", "exe"],
    [".msi", "msi"],
    [".cat", "cat"],
    [".pak", "pak"],
    [".ttc", "msi"],
    [".bin", "so"],
    [".sys", "sys"],
    [".", "red"],
    [".ttf", "sys"],
    [".etl", "dat"],
    [".1", "dll"],
    [".manifest", "pak"],
    [".mui", "mui"],
    [".dll_9c9d9...", "pak"],
    [".log1", "log"],
];

type TreeItem = { size: string; name: string; icon: "f" | "p" | "d" | "l"; arrow?: boolean; bar?: number; kind: string };

const tree: TreeItem[] = [
    { size: "25,4 ГБ", name: "Windows", icon: "f", arrow: true, bar: 78, kind: "bold" },
    { size: "17,2 ГБ", name: "Program Files", icon: "f", arrow: true, bar: 53, kind: "bold" },
    { size: "10,0 ГБ", name: "[Файлы - 7]", icon: "d", bar: 31, kind: "plain" },
    { size: "6,0 ГБ", name: "ProgramData", icon: "p", arrow: true, bar: 18, kind: "blue" },
    { size: "5,1 ГБ", name: "Users", icon: "f", arrow: true, bar: 15, kind: "blue" },
    { size: "3,3 ГБ", name: "Program Files (x86)", icon: "f", arrow: true, bar: 10, kind: "blue" },
    { size: "298,2 МБ", name: "System Volume Information", icon: "p", arrow: true, kind: "plain" },
    { size: "18,5 МБ", name: "Boot", icon: "p", arrow: true, kind: "plain" },
    { size: "14,1 МБ", name: "$Recycle.Bin", icon: "p", arrow: true, kind: "plain" },
    { size: "4,0 КБ", name: "Recovery", icon: "p", kind: "plain" },
    { size: "0 Байт", name: "body", icon: "f", arrow: true, kind: "plain" },
    { size: "0 Байт", name: "Documents and Settings", icon: "l", kind: "plain" },
    { size: "0 Байт", name: "FFOutput", icon: "f", arrow: true, kind: "plain" },
    { size: "0 Байт", name: "Games", icon: "f", kind: "plain" },
    { size: "0 Байт", name: "PerfLogs", icon: "f", kind: "plain" },
    { size: "0 Байт", name: "temp", icon: "f", kind: "plain" },
    { size: "0 Байт", name: "Voiceover", icon: "f", kind: "plain" },
];

const drives = [
    { name: "C:\\", total: "111 ГБ", free: "47,1 ГБ", pct: 42, main: true },
    { name: "D:\\", total: "298 ГБ", free: "11,4 ГБ", pct: 4 },
    { name: "E:\\", total: "75,0 ГБ", free: "22,9 ГБ", pct: 31 },
    { name: "F:\\", total: "390 ГБ", free: "22,4 ГБ", pct: 6 },
];

const App = () => (
    <Shell>
        <GlobalStyle />
        <TitleRow>
            <QuickAccess>
                <PersonBadge />
                <QuickSpacer />
                <FolderPlay />
                <CloudBadge />
                <DropMark />
                <QuickSep />
            </QuickAccess>
            <ContextTitle>Средства вкладки "Диаграмма"</ContextTitle>
            <WindowTitle>C:\ - TreeSize</WindowTitle>
            <SearchBox>
                Поиск (F6)
                <Search size={8} color="#888" />
            </SearchBox>
            <WindowButtons>
                <Minus size={9} />
                <Copy size={8} />
                <X size={10} />
            </WindowButtons>
        </TitleRow>
        <TabRow>
            <FileTab>Файл</FileTab>
            <Tab $w={44}>Главная</Tab>
            <Tab $w={67}>Сканирование</Tab>
            <Tab $w={43}>Сервис</Tab>
            <Tab $w={29}>Вид</Tab>
            <Tab $w={47}>Справка</Tab>
            <ActiveTab>Диаграмма</ActiveTab>
            <HelpCorner>
                <ChevronUp size={8} />
                <HelpDot>?</HelpDot>
            </HelpCorner>
        </TabRow>
        <Ribbon>
            <Group $w={118}>
                <GroupBody>
                    <BigButton $w={42}>
                        <PieIcon />
                        Круговая
                        <Caret />
                    </BigButton>
                    <BigButton $w={38}>
                        <HistogramIcon />
                        <BigWord>Гистограмма</BigWord>
                    </BigButton>
                    <BigButton $w={26} $ml={5} $on>
                        <TreemapIcon />
                        Карта дерева
                    </BigButton>
                </GroupBody>
                <GroupLabel>Тип диаграммы</GroupLabel>
            </Group>
            <Group $w={206}>
                <GroupBody $pad={4}>
                    <BigButton $w={40}>
                        <FloppyIcon />
                        Экспорт диаграммы
                    </BigButton>
                    <SmallStack $ml={2}>
                        <SmallRow>
                            <MailIcon />
                            Почта
                        </SmallRow>
                        <SmallRow>
                            <CopyIcon />
                            Скопировать диаграмму в буфер обмена
                        </SmallRow>
                        <SmallRow>
                            <PrintIcon />
                            Печать правой панели
                        </SmallRow>
                    </SmallStack>
                </GroupBody>
                <GroupLabel>Экспорт</GroupLabel>
            </Group>
            <Group $w={129}>
                <GroupBody $pad={2}>
                    <BigButton $w={30}>
                        <RainbowIcon />
                        Цвет
                        <Caret />
                    </BigButton>
                    <BigButton $w={44}>
                        <DetailIcon />
                        <BigWord>Детализация</BigWord>
                    </BigButton>
                    <BigButton $w={44} $ml={2}>
                        <IncludedIcon />
                        Включённые элементы ▾
                    </BigButton>
                </GroupBody>
                <GroupLabel />
            </Group>
            <Group $w={103}>
                <GroupBody $pad={6}>
                    <SmallStack>
                        <SmallRow>
                            <Check />
                            Объёмная диаграмма
                        </SmallRow>
                        <SmallRow $muted>
                            <Check $on>✓</Check>
                            Свободное место
                        </SmallRow>
                    </SmallStack>
                </GroupBody>
                <GroupLabel>Стиль</GroupLabel>
            </Group>
            <Group $w={76}>
                <GroupBody $pad={6}>
                    <SmallStack>
                        <SmallRow>
                            <ZoomIcon />
                            Увеличить
                        </SmallRow>
                        <SmallRow $muted>
                            <ZoomIcon muted />
                            Уменьшить
                        </SmallRow>
                        <SmallRow $muted>
                            <IconSlot />
                            Масштаб 100%
                        </SmallRow>
                    </SmallStack>
                </GroupBody>
                <GroupLabel>Масштаб</GroupLabel>
            </Group>
        </Ribbon>
        <AddressBar>
            <NavIcons>
                <ArrowLeft size={12} />
                <ArrowRight size={12} color="#bbb" />
                <ArrowUp size={12} />
            </NavIcons>
            <DriveCombo>
                <DriveIcon />
                <ComboText>Data (C:)</ComboText>
                <ChevronDown size={8} color="#777" />
            </DriveCombo>
            <PlayButton />
            <StatsRow>
                <StatLead>
                    <DriveIcon />
                    <Stat><b>Размер:</b> 70,3 ГБ</Stat>
                </StatLead>
                <Stat><b>Занято:</b> 67,3 ГБ</Stat>
                <Stat><b>Файлы:</b> 338 114</Stat>
                <Stat><b>Папки:</b> 162 929</Stat>
                <Stat><b>Изменено:</b> 15.12.2024</Stat>
                <Stat><b>Доступ:</b> 15.12.2024</Stat>
                <Stat><b>Владелец:</b> TrustedInstaller</Stat>
            </StatsRow>
        </AddressBar>
        <Main>
            <Sidebar>
                <TreePanel>
                    <TreeRow>
                        <RootBar />
                        <RootChevron>
                            <ChevronDown size={8} />
                        </RootChevron>
                        <RowIcon>
                            <DriveIcon />
                        </RowIcon>
                        <RootText $ml={2}>67,3 ГБ</RootText>
                        <RootText $ml={5}>C:\</RootText>
                        <RootText $ml={7}>[Data]</RootText>
                    </TreeRow>
                    {tree.map((row, i) => (
                        <TreeRow key={row.name} $selected={i === 0}>
                            {row.bar && <SizeBar style={{ width: row.bar }} />}
                            <Chevron>{row.arrow && <ChevronRight size={7} />}</Chevron>
                            <RowIcon>
                                {row.icon === "d" ? <Doc /> : <Folder pale={row.icon === "p" || row.icon === "l"} />}
                            </RowIcon>
                            <RowSize $bold={row.kind === "bold"}>{row.size}</RowSize>
                            <RowName $kind={row.kind}>{row.name}</RowName>
                        </TreeRow>
                    ))}
                </TreePanel>
                <DrivesPanel>
                    <SortMark>
                        <ChevronUp size={7} />
                    </SortMark>
                    <DriveGrid>
                        <HeadCell $align="left">Имя</HeadCell>
                        <HeadCell>Общий раз...</HeadCell>
                        <HeadCell>Свободно</HeadCell>
                        <HeadCell $align="center">% Свободно</HeadCell>
                        {drives.map(d => (
                            <React.Fragment key={d.name}>
                                <DriveCell $align="flex-start">
                                    {d.main ? <DriveIcon /> : <DiskIcon />}
                                    {d.name}
                                </DriveCell>
                                <DriveCell>{d.total}</DriveCell>
                                <DriveCell>{d.free}</DriveCell>
                                <FreeBar>
                                    <FreeFill $low={d.pct < 10} style={{ width: `${d.pct}%` }} />
                                    <FreeText>{d.pct} %</FreeText>
                                </FreeBar>
                            </React.Fragment>
                        ))}
                    </DriveGrid>
                </DrivesPanel>
            </Sidebar>
            <Content>
                <ViewTabs>
                    <ViewTab $on><TabPie />Диаграмма</ViewTab>
                    <ViewTab><TabGrid />Детали</ViewTab>
                    <ViewTab><TabExt />Расширения</ViewTab>
                    <ViewTab><TabUsers />Пользователи</ViewTab>
                    <ViewTab><TabCalendar />Возраст файлов</ViewTab>
                    <ViewTab><TabTop />Топ файлов</ViewTab>
                    <ViewTab><TabHistory />История</ViewTab>
                </ViewTabs>
                <Frame>
                    <Canvas>
                        {cells.map(([x, y, w, h, tone, label, icon], i) => (
                            <Cell key={i} $x={x} $y={y} $w={w} $h={h} $tone={tone}>
                                {cellIcon(icon)}
                                {label}
                            </Cell>
                        ))}
                    </Canvas>
                    <Legend>
                        {legend.map(([name, tone]) => (
                            <Chip key={name} $tone={tone}>{name}</Chip>
                        ))}
                    </Legend>
                </Frame>
            </Content>
        </Main>
        <StatusBar>
            <StatusCell $w={150}>Свободно: 47,1 ГБ&nbsp; (из 111 ГБ)</StatusCell>
            <StatusCell $w={100}>136 081 Файлы</StatusCell>
            <StatusCell $w={59}>0 Исключено</StatusCell>
            <StatusCell $w={150}>4 096 Байт на кластер (NTFS)</StatusCell>
            <StatusLink>
                <ShieldIcon />
                Доступ к обновлениям и поддержке
            </StatusLink>
        </StatusBar>
    </Shell>
);

export default App;
